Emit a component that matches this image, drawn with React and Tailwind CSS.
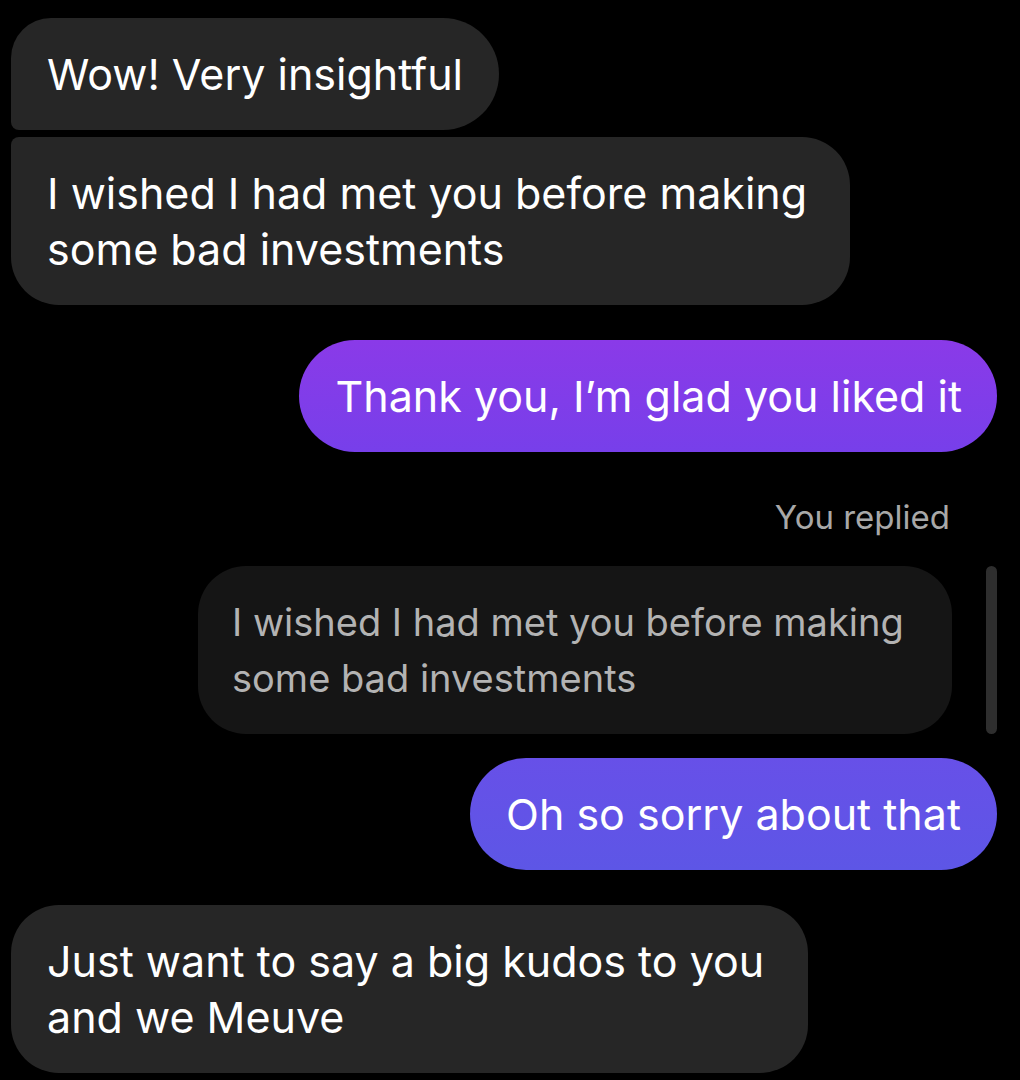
export default function App() {
  return (
    <div
      className="w-[1020px] h-[1080px] bg-black overflow-hidden pl-[11px] pr-[23px] pt-[18px] flex flex-col"
      style={{ fontFamily: "Inter, 'Noto Sans', sans-serif" }}
    >
      <div className="self-start bg-[#262626] text-white text-[43px] leading-[56px] px-[36px] py-[28px] rounded-tl-[40px] rounded-bl-[8px] rounded-r-[56px]">
        Wow! Very insightful
      </div>
      <div className="mt-[7px] self-start w-[839px] bg-[#262626] text-white text-[43px] leading-[56px] px-[36px] py-[28px] rounded-tl-[8px] rounded-bl-[48px] rounded-r-[48px] whitespace-nowrap">
        I wished I had met you before making
        <br />
        some bad investments
      </div>
      <div className="mt-[35px] self-end bg-gradient-to-b from-[#8a3ae8] to-[#773fea] text-white text-[43px] leading-[56px] pl-[37px] pr-[35px] py-[28px] rounded-full whitespace-nowrap">
        Thank you, I’m glad you liked it
      </div>
      <div className="mt-[45px] self-end pr-[47px] text-[#a8a8a8] text-[33px] leading-[40px]">
        You replied
      </div>
      <div className="mt-[29px] self-end flex items-stretch gap-[34px]">
        <div className="w-[754px] bg-[#151515] text-[#b3b3b3] text-[38px] leading-[56px] pl-[34px] py-[28px] rounded-[48px] whitespace-nowrap">
          I wished I had met you before making
          <br />
          some bad investments
        </div>
        <div className="w-[11px] bg-[#2e2e2e] rounded-full" />
      </div>
      <div className="mt-[24px] self-end bg-gradient-to-b from-[#6750e8] to-[#5d56e6] text-white text-[43px] leading-[56px] px-[36px] py-[28px] rounded-full whitespace-nowrap">
        Oh so sorry about that
      </div>
      <div className="mt-[35px] self-start w-[797px] bg-[#262626] text-white text-[43px] leading-[56px] px-[36px] py-[28px] rounded-[48px] whitespace-nowrap">
        Just want to say a big kudos to you
        <br />
        and we Meuve
      </div>
    </div>
  );
}
